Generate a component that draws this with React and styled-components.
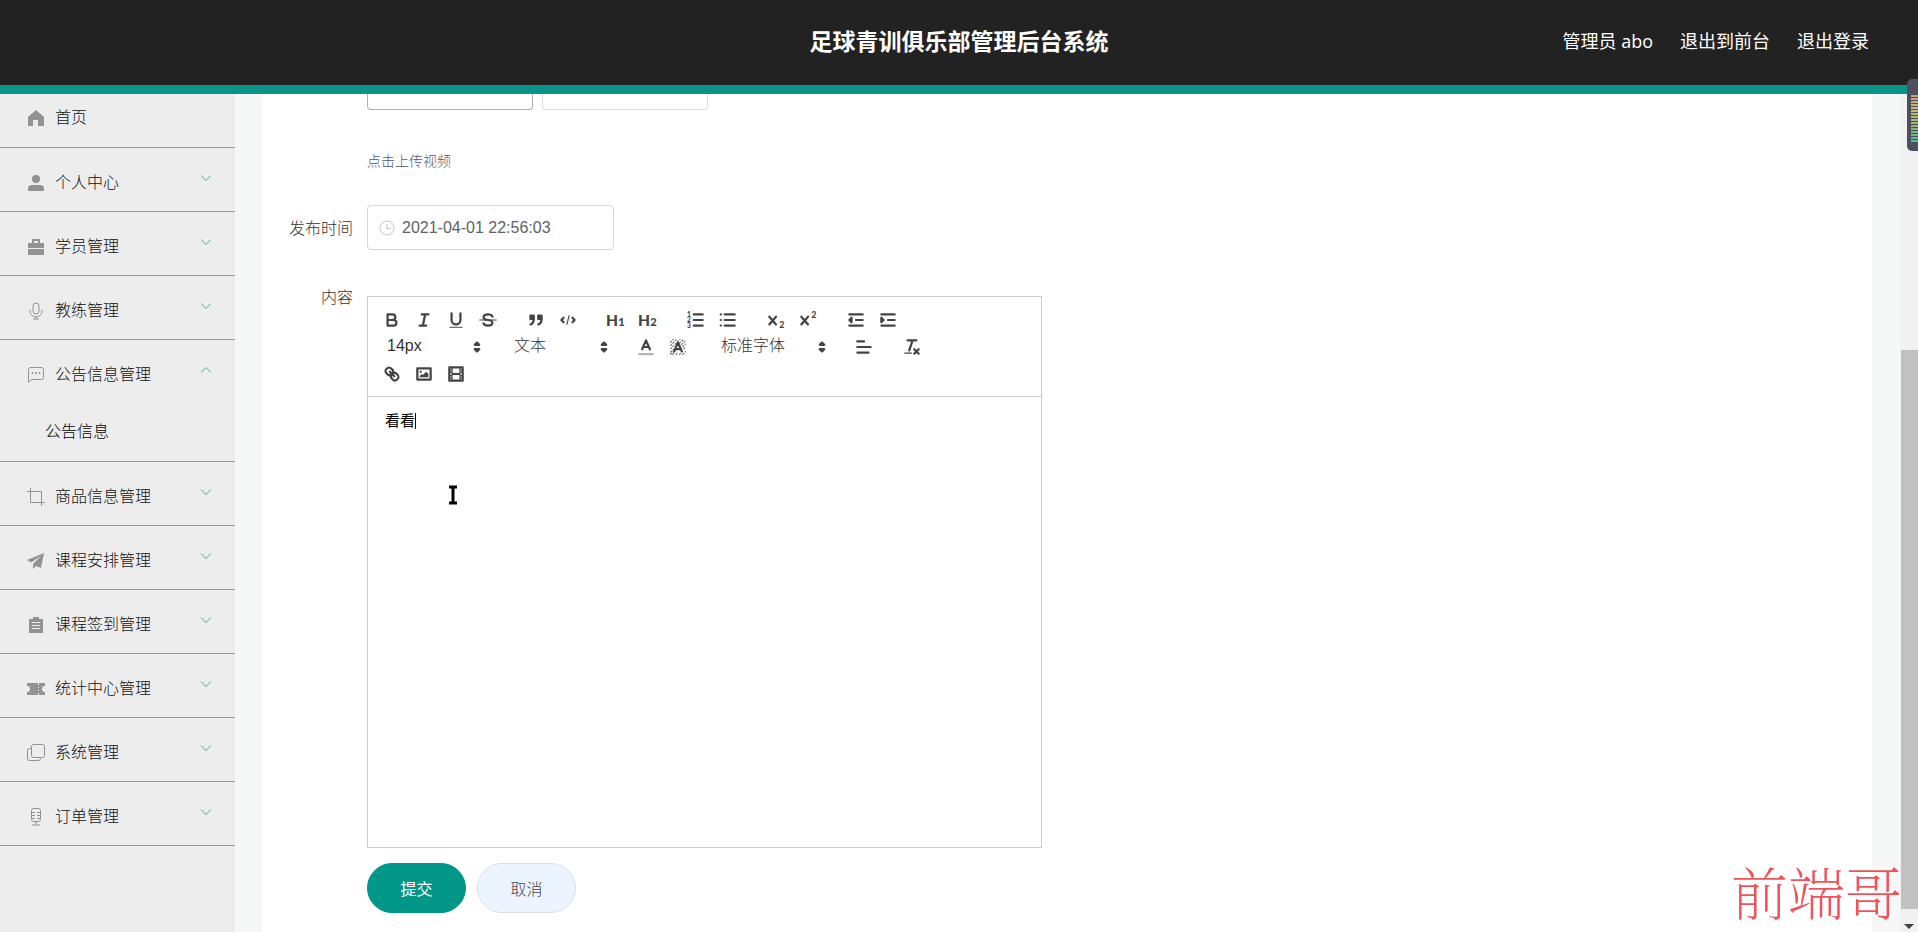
import React from 'react';
import styled, { createGlobalStyle } from 'styled-components';

const GlobalStyle = createGlobalStyle`
  * {
    box-sizing: border-box;
  }
  body {
    margin: 0;
    font-family: 'Liberation Sans', 'Noto Sans CJK SC', sans-serif;
    font-size: 16px;
    color: #222;
    background: #f6f7f7;
  }
  button, input, select, textarea {
    font: inherit;
    color: inherit;
  }
`;

const Page = styled.div`
  display: flex;
  flex-direction: column;
  height: 100vh;
  overflow: hidden;
`;

const Header = styled.header`
  display: grid;
  grid-template-columns: 1fr auto 1fr;
  align-items: center;
  flex-shrink: 0;
  height: 94px;
  padding: 0 49px 4px;
  background: #222;
  border-bottom: 9px solid #0a9387;
  color: #fff;
  font-family: 'Open Sans', 'Noto Sans CJK SC', sans-serif;
`;

const Title = styled.h1`
  grid-column: 2;
  margin: 0;
  font-size: 23px;
  font-weight: 700;
  line-height: 30px;
`;

const UserNav = styled.nav`
  display: flex;
  justify-content: flex-end;
  gap: 27px;
  font-size: 18px;
  line-height: 30px;
`;

const UserLink = styled.a`
  color: #fff;
  text-decoration: none;
`;

const Body = styled.div`
  display: flex;
  flex: 1;
  min-height: 0;
`;

const Sidebar = styled.aside`
  width: 235px;
  flex-shrink: 0;
  background: #ededed;
`;

const MenuList = styled.ul`
  list-style: none;
  margin: 0;
  padding: 0;
`;

const MenuGroup = styled.li`
  border-bottom: 1px solid #999;
`;

const MenuButton = styled.button`
  display: flex;
  align-items: center;
  width: 100%;
  height: ${(props) => (props.$first ? '53px' : '63px')};
  padding: ${(props) => (props.$first ? '0 20px 6px 27px' : '6px 20px 0 27px')};
  border: 0;
  background: none;
  text-align: left;
  font-weight: 300;
  line-height: 24px;
  color: #111;
  cursor: pointer;
`;

const MenuIcon = styled.svg`
  width: 18px;
  height: 18px;
  margin-right: 10px;
  fill: #929292;
  stroke: none;

  .line {
    fill: none;
    stroke: #929292;
  }
`;

const MenuText = styled.span`
  flex: 1;
`;

const Chevron = styled.svg`
  width: 18px;
  height: 18px;
  margin-bottom: 9px;
  fill: none;
  stroke: #4aa99c;
`;

const SubLink = styled.a`
  display: block;
  padding: 14px 45px 14px;
  color: #000;
  font-weight: 300;
  line-height: 30px;
  text-decoration: none;
`;

const Main = styled.main`
  flex: 1;
  min-width: 0;
  padding: 0 28px 0 27px;
`;

const Card = styled.form`
  height: 100%;
  padding-left: 14px;
  background: #fff;
`;

const FormRow = styled.div`
  display: grid;
  grid-template-columns: 77px 1fr;
  column-gap: 14px;
  align-items: ${(props) => props.$align || 'start'};
`;

const Label = styled.label`
  padding-top: 2px;
  text-align: right;
  font-weight: 300;
  line-height: 22px;
  color: #333;
`;

const UploadArea = styled.div`
  grid-column: 2;
`;

const Tiles = styled.div`
  display: flex;
  gap: 9px;
`;

const Tile = styled.div`
  width: 166px;
  height: 16px;
  border: 1px solid ${(props) => (props.$dark ? '#b0b0b0' : '#ddd')};
  border-top: 0;
  border-radius: 0 0 4px 4px;
`;

const Tip = styled.p`
  margin: 41px 0 34px;
  font-size: 14px;
  font-weight: 300;
  line-height: 20px;
  color: #505770;
`;

const DateBox = styled.div`
  display: flex;
  align-items: center;
  gap: 7px;
  width: 247px;
  height: 45px;
  padding: 0 11px;
  border: 1px solid #d6d6d6;
  border-radius: 4px;
`;

const ClockIcon = styled.svg`
  flex-shrink: 0;
  width: 16px;
  height: 16px;
  fill: none;
  stroke: #c0c4cc;
`;

const DateInput = styled.input`
  width: 100%;
  padding: 0;
  border: 0;
  outline: 0;
  color: #606266;
  background: none;
`;

const EditorRow = styled(FormRow)`
  margin-top: 35px;
`;

const Editor = styled.div`
  width: 675px;
  margin-top: 11px;
  border: 1px solid #ccc;
`;

const Toolbar = styled.div`
  padding: 9px 8px;
  border-bottom: 1px solid #ccc;
`;

const ToolRow = styled.div`
  display: flex;
  gap: 16px;
  height: 27px;
`;

const ToolGroup = styled.div`
  display: flex;
`;

const ToolButton = styled.button`
  display: flex;
  align-items: center;
  justify-content: center;
  width: 32px;
  height: 27px;
  padding: 0;
  border: 0;
  background: none;
  cursor: pointer;
`;

const ToolIcon = styled.svg`
  width: 20px;
  height: 20px;
  fill: none;
  stroke: #444;
  stroke-width: 2;
  stroke-linecap: round;
  stroke-linejoin: round;

  .fill {
    fill: #444;
    stroke: none;
  }
  .both {
    fill: #444;
  }
  .thin {
    stroke-width: 1;
  }
  .hatch {
    stroke-width: 1;
    stroke-dasharray: 2 1;
    stroke-linecap: butt;
    opacity: 0.8;
  }
  text {
    fill: #444;
    stroke: none;
    font-family: Lato, sans-serif;
    font-weight: 900;
  }
`;

const Picker = styled.div`
  display: flex;
  align-items: center;
  width: ${(props) => props.$width};
  padding-left: 11px;
`;

const PickerSelect = styled.select`
  flex: 1;
  min-width: 0;
  height: 24px;
  margin-bottom: 3px;
  padding: 0;
  border: 0;
  outline: 0;
  appearance: none;
  background: none;
  font-weight: 300;
  color: #333;
`;

const Writing = styled.div`
  position: relative;
  height: 450px;
`;

const TextArea = styled.textarea`
  display: block;
  width: 100%;
  height: 100%;
  padding: 13px 17px;
  border: 0;
  outline: 0;
  resize: none;
  background: none;
  font-size: 15px;
  line-height: 22px;
  color: #000;
`;

const Caret = styled.span`
  position: absolute;
  left: 47px;
  top: 16px;
  width: 1px;
  height: 16px;
  background: #000;
`;

const Actions = styled.div`
  display: flex;
  gap: 11px;
  padding: 15px 0 0 91px;
`;

const ActionButton = styled.button`
  width: 99px;
  height: 50px;
  border: 1px solid ${(props) => (props.$primary ? '#009688' : '#dcdfe6')};
  border-radius: 25px;
  background: ${(props) => (props.$primary ? '#009688' : '#ecf5ff')};
  color: ${(props) => (props.$primary ? '#fff' : '#444650')};
  font-weight: ${(props) => (props.$primary ? 400 : 300)};
  cursor: pointer;
`;

const ScrollTrack = styled.div`
  display: flex;
  flex-direction: column;
  width: 18px;
  background: #f1f1f1;
`;

const ScrollSpace = styled.div`
  flex: 256;
`;

const ScrollThumb = styled.div`
  flex: 559;
  margin-left: 1px;
  background: #c1c1c1;
`;

const ScrollArrow = styled.svg`
  width: 18px;
  height: 23px;
  fill: #444;
`;

const Meter = styled.div`
  position: absolute;
  right: 0;
  top: 79px;
  width: 11px;
  height: 72px;
  padding: 16px 0 8px 4px;
  border-radius: 5px 0 0 5px;
  background: #4d4f5f;
`;

const MeterBars = styled.div`
  height: 100%;
  background:
    repeating-linear-gradient(transparent 0 2px, #4d4f5f 2px 3px),
    linear-gradient(#cf9a78, #c3c267 30%, #93b869 60%, #45bfae);
`;

const Pointer = styled.svg`
  position: absolute;
  left: 448px;
  top: 485px;
  width: 10px;
  height: 20px;
  fill: none;
  stroke: #000;
`;

const Watermark = styled.div`
  position: absolute;
  right: 16px;
  bottom: 0;
  font-family: 'Noto Serif CJK SC', 'Noto Sans CJK SC', serif;
  font-size: 57px;
  font-weight: 100;
  line-height: 84px;
  color: #f0525a;
`;

const menu = [
  {
    label: '首页',
    icon: <path d="M9 1 1 8v9h5v-6h5v6h6V8z" />,
  },
  {
    label: '个人中心',
    icon: (
      <>
        <circle cx="9" cy="5" r="4" />
        <path d="M1 17v-2a4 4 0 0 1 4-4h8a4 4 0 0 1 4 4v2z" />
      </>
    ),
  },
  {
    label: '学员管理',
    icon: <path d="M5 1h8v4h4v5H1V5h4zM7 3v2h4V3zM1 11h16v6H1z" fillRule="evenodd" />,
  },
  {
    label: '教练管理',
    icon: (
      <g className="line">
        <rect x="6" y="1" width="6" height="11" rx="3" />
        <path d="M3 8v1a6 6 0 0 0 12 0V8M9 15v2M6 17h6" />
      </g>
    ),
  },
  {
    label: '公告信息管理',
    open: true,
    children: ['公告信息'],
    icon: (
      <>
        <path className="line" d="M1.500 16V3.500a2 2 0 0 1 2-2h11a2 2 0 0 1 2 2v8a2 2 0 0 1-2 2H5z" />
        <circle cx="5.500" cy="7" r="1" />
        <circle cx="9" cy="7" r="1" />
        <circle cx="12.500" cy="7" r="1" />
      </>
    ),
  },
  {
    label: '商品信息管理',
    icon: <path className="line" d="M0 3.500h14.500V18M3.500 0v14.500H18" />,
  },
  {
    label: '课程安排管理',
    icon: <path d="M17 1 0 8l4 2.500L14 4 6 12v5l3-3 5 2z" />,
  },
  {
    label: '课程签到管理',
    icon: <path d="M2 3h4V1h6v2h4v14H2zM5 6v1h8V6zM5 9v1h8V9zM5 12v1h8v-1z" fillRule="evenodd" />,
  },
  {
    label: '统计中心管理',
    icon: <path d="M0 3h11v2h1V3h6v3a3 3 0 0 0 0 6v3h-6v-2h-1v2H0v-3a3 3 0 0 0 0-6zM11 7v1h1V7zM11 10v1h1v-1z" fillRule="evenodd" />,
  },
  {
    label: '系统管理',
    icon: (
      <g className="line">
        <rect x="4.500" y="0.500" width="13" height="13" rx="2" />
        <path d="M4 4.500H2.500a2 2 0 0 0-2 2v8a2 2 0 0 0 2 2h9a2 2 0 0 0 2-2" />
      </g>
    ),
  },
  {
    label: '订单管理',
    icon: (
      <g className="line">
        <rect x="4.500" y="0.500" width="9" height="13" rx="2" />
        <path d="M5 4.500h3M10 4.500h3M5 7.500h3M10 7.500h3M5 10.500h3M10 10.500h3M9 14v3M5 17h8" />
      </g>
    ),
  },
];

const icons = {
  bold: <path d="M5 4h4.500a2.500 2.500 0 0 1 0 5H5zM5 9h5.500a2.500 2.500 0 0 1 0 5H5z" />,
  italic: <path d="M7 4h6M5 14h6M8 14l2-10" />,
  underline: (
    <>
      <path d="M5 3v6a4 4 0 0 0 8 0V3" />
      <rect className="fill" x="3" y="15" width="12" height="1" rx="0.500" />
    </>
  ),
  strike: (
    <>
      <path className="thin" d="M1.500 9h15" />
      <path d="M13 6c-.4-1.200-2-2-4-2-2.300 0-4 1-4 2.500C5 8 6 8.700 9 9s4 1 4 2.500S11.300 14 9 14c-2 0-3.600-.8-4-2" />
    </>
  ),
  quote: (
    <>
      <rect className="both" x="4" y="5" width="3" height="3" />
      <rect className="both" x="11" y="5" width="3" height="3" />
      <path className="both" d="M7 8c0 4-3 5-3 5M14 8c0 4-3 5-3 5" />
    </>
  ),
  code: (
    <>
      <path d="M5 7 3 9l2 2M13 7l2 2-2 2" />
      <path className="thin" d="M10 5 8 13" />
    </>
  ),
  h1: (
    <>
      <text x="0" y="14" fontSize="14">H</text>
      <text x="11" y="14" fontSize="10">1</text>
    </>
  ),
  h2: (
    <>
      <text x="0" y="14" fontSize="14">H</text>
      <text x="11" y="14" fontSize="10">2</text>
    </>
  ),
  ordered: (
    <>
      <path d="M7 4h8M7 9h8M7 14h8" />
      <text x="1" y="6" fontSize="6">1</text>
      <text x="1" y="11" fontSize="6">2</text>
      <text x="1" y="16" fontSize="6">3</text>
    </>
  ),
  bullet: <path d="M6 4h9M6 9h9M6 14h9M2.500 4h.1M2.500 9h.1M2.500 14h.1" />,
  sub: (
    <>
      <path d="M3 6l6 7M9 6l-6 7" />
      <text x="12" y="16" fontSize="8">2</text>
    </>
  ),
  sup: (
    <>
      <path d="M3 6l6 7M9 6l-6 7" />
      <text x="12" y="7" fontSize="8">2</text>
    </>
  ),
  outdent: <path className="both" d="M3 14h12M3 4h12M9 9h6M5 7v4L3 9z" />,
  indent: <path className="both" d="M3 14h12M3 4h12M9 9h6M3 7v4l2-2z" />,
  color: (
    <>
      <path d="M3 15.500h12" opacity="0.4" />
      <path d="M5.500 11 9 3l3.500 8M7 9h4" />
    </>
  ),
  background: (
    <>
      <path
        className="hatch"
        d="M2 5l3-3M2 8l6-6M2 11l9-9M2 14l3-3M2 16l3-3M10 6l4-4M12 7l4-4M13 9l3-3M14 11l2-2M4 16l2-2M7 16l2-2M10 16l2-2M13 16l3-3"
      />
      <path d="M5.500 13 9 5l3.500 8M7 11h4" />
    </>
  ),
  align: <path d="M3 4h6M3 9h12M3 14h10" />,
  clean: (
    <>
      <path d="M5 3h8M6.500 12 9.500 3M11 11l4 4M15 11l-4 4" />
      <rect className="fill" x="2" y="14" width="7" height="1" rx="0.500" />
    </>
  ),
  link: (
    <>
      <path d="M7 7l4 4" />
      <path d="M8.900 4.577a3.476 3.476 0 0 1 .36 4.679A3.476 3.476 0 0 1 4.577 8.900C3.185 7.500 2.035 6.400 4.217 4.217S7.500 3.185 8.900 4.577zM13.423 9.100a3.476 3.476 0 0 0-4.679-.36 3.476 3.476 0 0 0 .36 4.679c1.392 1.392 2.500 2.542 4.679.36S14.815 10.500 13.423 9.100z" />
    </>
  ),
  image: (
    <>
      <rect x="3" y="4" width="12" height="10" />
      <circle className="fill" cx="6" cy="7" r="1" />
      <path className="fill" d="M5 12v-1l2-2 1 1 3-3 2 2v3z" />
    </>
  ),
  video: (
    <>
      <rect x="3" y="3" width="12" height="12" />
      <path className="fill" d="M5 3h1v12H5zM12 3h1v12h-1zM5 8h8v2H5zM3 5h3v1H3zM3 7h3v1H3zM3 10h3v1H3zM3 12h3v1H3zM12 5h3v1h-3zM12 7h3v1h-3zM12 10h3v1h-3zM12 12h3v1h-3z" />
    </>
  ),
  arrows: <path className="both" d="M7 11l2 2 2-2zM7 7l2-2 2 2z" />,
};

function Icon({ name }) {
  return (
    <ToolIcon viewBox="0 0 18 18" aria-hidden="true">
      {icons[name]}
    </ToolIcon>
  );
}

function Tools({ names }) {
  return (
    <ToolGroup>
      {names.map((name) => (
        <ToolButton key={name} type="button" aria-label={name}>
          <Icon name={name} />
        </ToolButton>
      ))}
    </ToolGroup>
  );
}

function ToolPicker({ label, value, width }) {
  return (
    <Picker $width={width}>
      <PickerSelect aria-label={label}>
        <option>{value}</option>
      </PickerSelect>
      <Icon name="arrows" />
    </Picker>
  );
}

function MenuItem({ item, first }) {
  return (
    <MenuGroup>
      <MenuButton type="button" $first={first}>
        <MenuIcon viewBox="0 0 18 18">{item.icon}</MenuIcon>
        <MenuText>{item.label}</MenuText>
        {!first && (
          <Chevron viewBox="0 0 18 18">
            <path d={item.open ? 'M4 11.500l5-5 5 5' : 'M4 6.500l5 5 5-5'} />
          </Chevron>
        )}
      </MenuButton>
      {item.children &&
        item.children.map((child) => (
          <SubLink key={child} href="#news">
            {child}
          </SubLink>
        ))}
    </MenuGroup>
  );
}

export default function App() {
  return (
    <Page>
      <GlobalStyle />
      <Header>
        <Title>足球青训俱乐部管理后台系统</Title>
        <UserNav>
          <UserLink href="#user">管理员 abo</UserLink>
          <UserLink href="#front">退出到前台</UserLink>
          <UserLink href="#logout">退出登录</UserLink>
        </UserNav>
      </Header>
      <Body>
        <Sidebar>
          <MenuList>
            {menu.map((item, index) => (
              <MenuItem key={item.label} item={item} first={index === 0} />
            ))}
          </MenuList>
        </Sidebar>
        <Main>
          <Card>
            <FormRow>
              <UploadArea>
                <Tiles>
                  <Tile $dark />
                  <Tile />
                </Tiles>
                <Tip>点击上传视频</Tip>
              </UploadArea>
            </FormRow>
            <FormRow $align="center">
              <Label htmlFor="publish-time">发布时间</Label>
              <DateBox>
                <ClockIcon viewBox="0 0 16 16">
                  <circle cx="8" cy="8" r="7" />
                  <path d="M8 4v4.500h4" />
                </ClockIcon>
                <DateInput id="publish-time" defaultValue="2021-04-01 22:56:03" />
              </DateBox>
            </FormRow>
            <EditorRow>
              <Label htmlFor="content">内容</Label>
              <Editor>
                <Toolbar>
                  <ToolRow>
                    <Tools names={['bold', 'italic', 'underline', 'strike']} />
                    <Tools names={['quote', 'code']} />
                    <Tools names={['h1', 'h2']} />
                    <Tools names={['ordered', 'bullet']} />
                    <Tools names={['sub', 'sup']} />
                    <Tools names={['outdent', 'indent']} />
                  </ToolRow>
                  <ToolRow>
                    <ToolPicker label="字号" value="14px" width="111px" />
                    <ToolPicker label="标题" value="文本" width="111px" />
                    <Tools names={['color', 'background']} />
                    <ToolPicker label="字体" value="标准字体" width="122px" />
                    <Tools names={['align']} />
                    <Tools names={['clean']} />
                  </ToolRow>
                  <ToolRow>
                    <Tools names={['link', 'image', 'video']} />
                  </ToolRow>
                </Toolbar>
                <Writing>
                  <TextArea id="content" defaultValue="看看" />
                  <Caret />
                </Writing>
              </Editor>
            </EditorRow>
            <Actions>
              <ActionButton type="button" $primary>
                提交
              </ActionButton>
              <ActionButton type="button">取消</ActionButton>
            </Actions>
          </Card>
        </Main>
        <ScrollTrack>
          <ScrollSpace />
          <ScrollThumb />
          <ScrollArrow viewBox="0 0 18 23">
            <path d="M4 15h10l-5 5z" />
          </ScrollArrow>
        </ScrollTrack>
      </Body>
      <Meter>
        <MeterBars />
      </Meter>
      <Pointer viewBox="0 0 10 20">
        <path d="M5 2v16" strokeWidth="3" />
        <path d="M1 2h8M1 18h8" strokeWidth="3" />
      </Pointer>
      <Watermark>前端哥</Watermark>
    </Page>
  );
}
